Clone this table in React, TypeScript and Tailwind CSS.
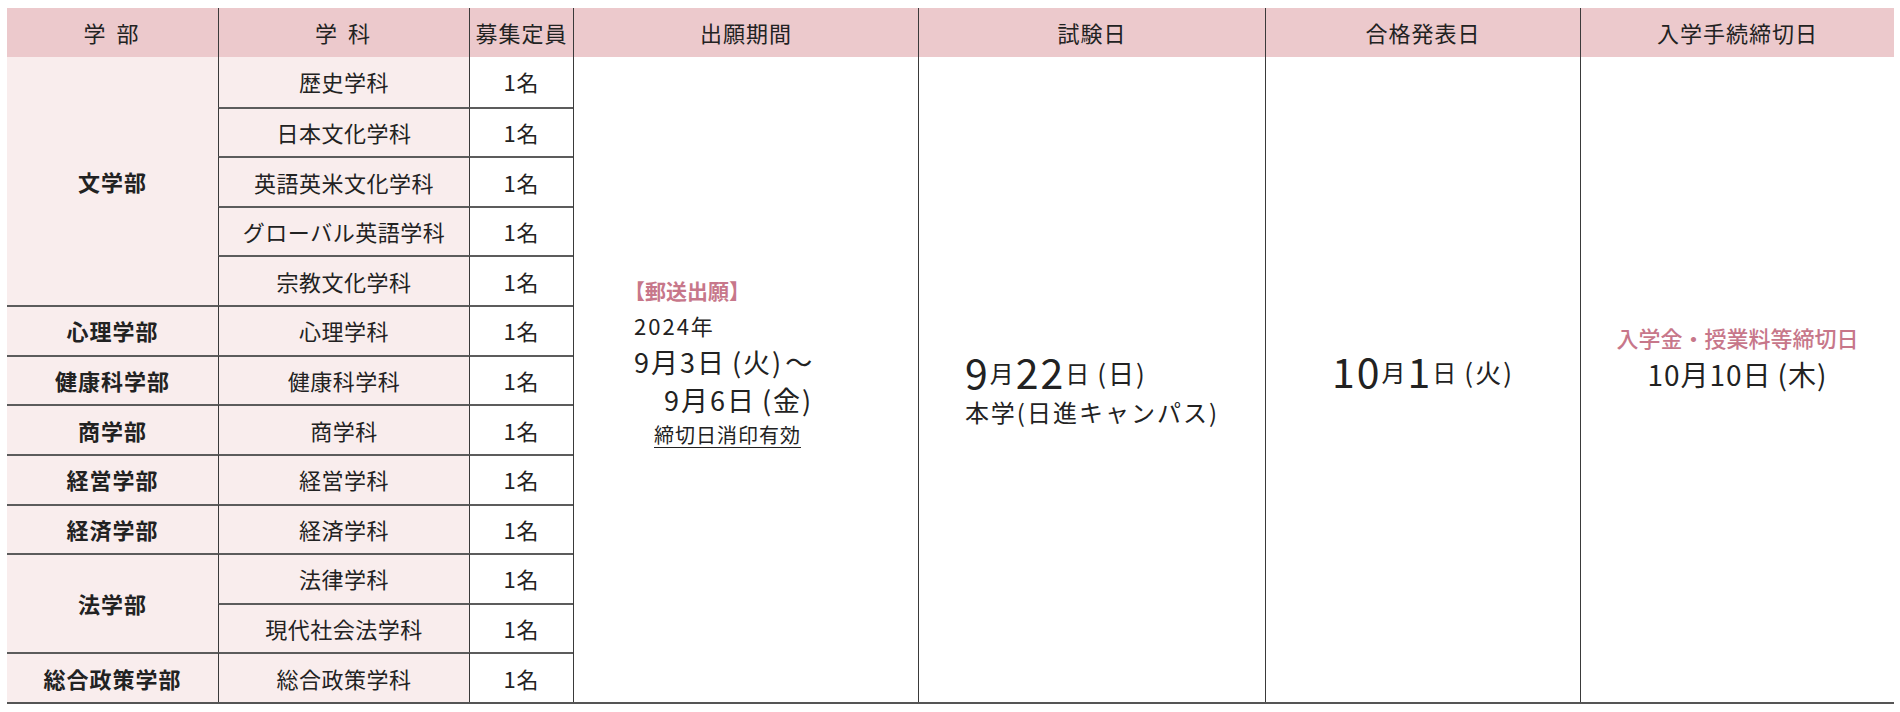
import React from "react";

const FONT = "font-['Noto_Sans_CJK_JP','Noto_Sans_CJK_SC',sans-serif]";

type Dept = { name: string; seats: string };
type Faculty = { name: string; depts: Dept[] };

const FACULTIES: Faculty[] = [
  {
    name: "文学部",
    depts: [
      { name: "歴史学科", seats: "1名" },
      { name: "日本文化学科", seats: "1名" },
      { name: "英語英米文化学科", seats: "1名" },
      { name: "グローバル英語学科", seats: "1名" },
      { name: "宗教文化学科", seats: "1名" },
    ],
  },
  { name: "心理学部", depts: [{ name: "心理学科", seats: "1名" }] },
  { name: "健康科学部", depts: [{ name: "健康科学科", seats: "1名" }] },
  { name: "商学部", depts: [{ name: "商学科", seats: "1名" }] },
  { name: "経営学部", depts: [{ name: "経営学科", seats: "1名" }] },
  { name: "経済学部", depts: [{ name: "経済学科", seats: "1名" }] },
  {
    name: "法学部",
    depts: [
      { name: "法律学科", seats: "1名" },
      { name: "現代社会法学科", seats: "1名" },
    ],
  },
  { name: "総合政策学部", depts: [{ name: "総合政策学科", seats: "1名" }] },
];

const HEADERS = ["学 部", "学 科", "募集定員", "出願期間", "試験日", "合格発表日", "入学手続締切日"];

function HeaderRow() {
  return (
    <>
      {HEADERS.map((h, i) => (
        <div
          key={h}
          className={`flex items-center justify-center bg-[#ecc9cc] text-[22px] text-[#222] ${
            h.includes(" ") ? "tracking-[3px]" : "tracking-[1px]"
          } ${i > 0 ? "border-l border-[#3a3a3a]" : ""}`}
        >
          {h}
        </div>
      ))}
    </>
  );
}

function FacultyCells() {
  let row = 2;
  const cells: React.ReactNode[] = [];
  FACULTIES.forEach((f, fi) => {
    const start = row;
    const span = f.depts.length;
    cells.push(
      <div
        key={`f-${f.name}`}
        className={`col-start-1 flex items-center justify-center bg-[#f9eded] text-[22px] font-bold tracking-[1px] text-[#222] ${
          fi > 0 ? "border-t-2 border-[#5c5c5c]" : ""
        }`}
        style={{ gridRow: `${start} / span ${span}` }}
      >
        {f.name}
      </div>
    );
    f.depts.forEach((d, di) => {
      const r = start + di;
      const first = r === 2;
      cells.push(
        <div
          key={`d-${d.name}`}
          className={`col-start-2 flex items-center justify-center border-l border-[#3a3a3a] bg-[#f9eded] text-[22px] tracking-[0.5px] text-[#222] ${
            first ? "" : "border-t-2 border-t-[#5c5c5c]"
          }`}
          style={{ gridRow: `${r}` }}
        >
          {d.name}
        </div>
      );
      cells.push(
        <div
          key={`s-${d.name}`}
          className={`col-start-3 flex items-center justify-center border-l border-[#3a3a3a] bg-white text-[22px] tracking-[1px] text-[#222] ${
            first ? "" : "border-t-2 border-t-[#5c5c5c]"
          }`}
          style={{ gridRow: `${r}` }}
        >
          {d.seats}
        </div>
      );
    });
    row += span;
  });
  return <>{cells}</>;
}

function ApplicationPeriod() {
  return (
    <div className="col-start-4 row-start-2 row-span-13 border-l border-[#3a3a3a] bg-white pl-[60px] pt-[217px] text-[#222]">
      <div className="-ml-[10px] flex h-[34px] items-center text-[21px] font-bold text-[#c7778a]">【郵送出願】</div>
      <div className="flex h-[34px] items-center text-[22px] tracking-[2px]">2024年</div>
      <div className="flex h-[38px] items-center text-[27px] leading-none tracking-[2px]">
        <span>9月3日</span>
        <span className="ml-[6px]">(火)</span>
        <span className="ml-[2px]">～</span>
      </div>
      <div className="flex h-[38px] items-center pl-[30px] text-[27px] leading-none tracking-[2px]">
        <span>9月6日</span>
        <span className="ml-[6px]">(金)</span>
      </div>
      <div className="flex h-[34px] items-center pl-[20px] text-[20px] tracking-[1px]">
        <span className="underline decoration-1 underline-offset-[4px]">締切日消印有効</span>
      </div>
    </div>
  );
}

function ExamDate() {
  return (
    <div className="col-start-5 row-start-2 row-span-13 flex flex-col items-center border-l border-[#3a3a3a] bg-white pt-[291px] text-[#222]">
      <div className="flex flex-col items-start">
        <div className="flex h-[46px] items-center leading-none tracking-[2px]">
          <span className="text-[41px]">9</span>
          <span className="mb-[9px] self-end text-[24px]">月</span>
          <span className="text-[41px]">22</span>
          <span className="mb-[9px] self-end text-[24px]">日</span>
          <span className="mb-[8px] ml-[6px] self-end text-[26px]">(日)</span>
        </div>
        <div className="flex h-[36px] items-center text-[24px] tracking-[2px]">本学(日進キャンパス)</div>
      </div>
    </div>
  );
}

function ResultDate() {
  return (
    <div className="col-start-6 row-start-2 row-span-13 flex flex-col items-center border-l border-[#3a3a3a] bg-white pt-[290px] text-[#222]">
      <div className="flex h-[46px] items-center leading-none tracking-[2px]">
        <span className="text-[41px]">10</span>
        <span className="mb-[9px] self-end text-[24px]">月</span>
        <span className="text-[41px]">1</span>
        <span className="mb-[9px] self-end text-[24px]">日</span>
        <span className="mb-[8px] ml-[6px] self-end text-[26px]">(火)</span>
      </div>
    </div>
  );
}

function EnrollmentDeadline() {
  return (
    <div className="col-start-7 row-start-2 row-span-13 flex flex-col items-center border-l border-[#3a3a3a] bg-white pt-[263px] text-[#222]">
      <div className="flex h-[34px] items-center text-[22px] font-medium text-[#c7778a]">入学金・授業料等締切日</div>
      <div className="flex h-[40px] items-center text-[28px] leading-none tracking-[1px]">
        <span>10月10日</span>
        <span className="ml-[6px]">(木)</span>
      </div>
    </div>
  );
}

export default function App() {
  return (
    <div className={`min-h-[712px] w-[1900px] bg-white pl-[7px] pt-[8px] ${FONT}`}>
      <div className="grid h-[696px] w-[1887px] grid-cols-[211px_251px_104px_345px_347px_315px_314px] grid-rows-[49px_repeat(13,minmax(0,1fr))] border-b-2 border-[#555]">
        <HeaderRow />
        <FacultyCells />
        <ApplicationPeriod />
        <ExamDate />
        <ResultDate />
        <EnrollmentDeadline />
      </div>
    </div>
  );
}
